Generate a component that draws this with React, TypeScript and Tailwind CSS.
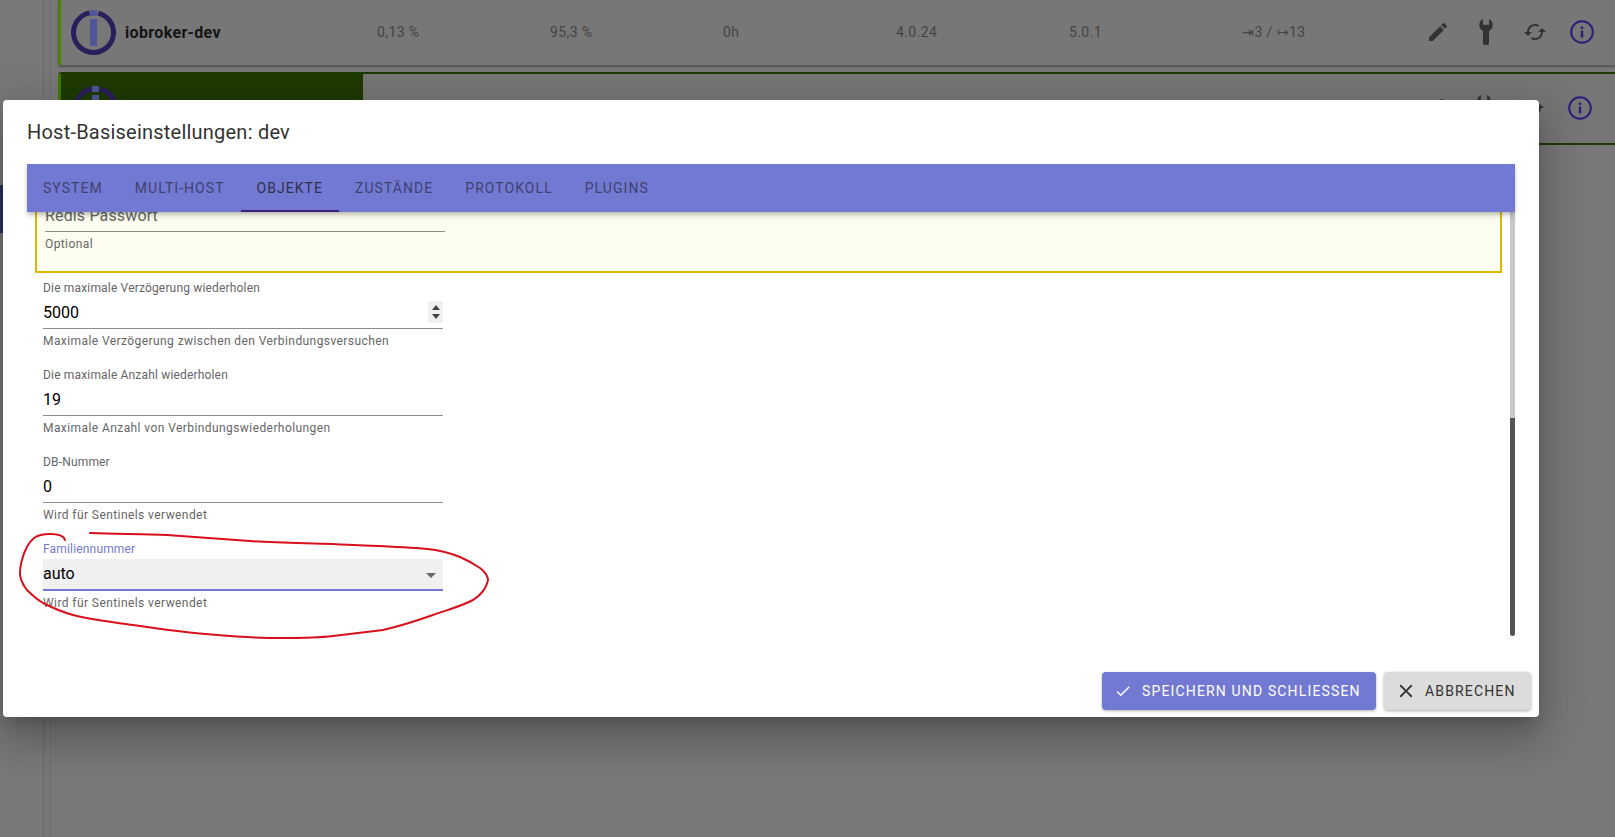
import { MdCached, MdCheck, MdClose, MdEdit } from 'react-icons/md';

const tabs = ['SYSTEM', 'MULTI-HOST', 'OBJEKTE', 'ZUSTÄNDE', 'PROTOKOLL', 'PLUGINS'];
const stats = ['0,13 %', '95,3 %', '0h', '4.0.24', '5.0.1', '⇥3 / ↦13'];

function Logo() {
  return (
    <svg width="45" height="45" viewBox="0 0 45 45">
      <circle
        cx="22.5"
        cy="22.5"
        r="20"
        fill="none"
        stroke="#2a1f5c"
        strokeWidth="5"
        strokeDasharray="116 9.66"
        strokeDashoffset="-4.83"
        transform="rotate(-90 22.5 22.5)"
      />
      <rect x="19" y="0" width="7" height="6" fill="#4d5698" />
      <rect x="19" y="9" width="7" height="27" fill="#4d5698" />
    </svg>
  );
}

function Wrench() {
  return (
    <svg width="14" height="26" viewBox="0 0 13 25" fill="#333333">
      <path d="M3.5 0C1.3 1 0 3.3 0 5.8c0 2.6 1.5 4.7 3.6 5.7V23c0 1.3.6 2 1.6 2h2.6c1 0 1.6-.7 1.6-2V11.5c2.1-1 3.6-3.1 3.6-5.7 0-2.5-1.3-4.8-3.5-5.8v5.5h-6z" />
    </svg>
  );
}

function Info() {
  return (
    <svg width="24" height="24" viewBox="0 0 24 24">
      <circle cx="12" cy="12" r="10.8" fill="none" stroke="#2e1a7a" strokeWidth="2" />
      <rect x="10.8" y="10.5" width="2.4" height="7" fill="#2e1a7a" />
      <rect x="10.8" y="6.5" width="2.4" height="2.4" fill="#2e1a7a" />
    </svg>
  );
}

function RowIcons() {
  return (
    <div className="flex items-center pb-[2px] text-[#333333]">
      <div className="mr-[2px] flex w-[46px] justify-center"><MdEdit size={24} /></div>
      <div className="mr-[3px] flex w-[46px] justify-center"><Wrench /></div>
      <div className="flex w-[46px] justify-center"><MdCached size={24} /></div>
      <div className="flex w-[48px] justify-center"><Info /></div>
    </div>
  );
}

function Field({ label, value, help, spinner }: { label: string; value: string; help: string; spinner?: boolean }) {
  return (
    <div className="mb-[19px] w-[408px] pl-2">
      <div className="text-xs leading-[15px] tracking-[0.17px] text-[#666666]">{label}</div>
      <div className="relative h-[33px] border-b border-[#8c8c8c] pt-[5px] text-base leading-6 text-black">
        {value}
        {spinner && (
          <div className="absolute right-0 top-[5px] flex h-[22px] w-[15px] flex-col items-center justify-center gap-[4px] bg-[#f0f0f0]">
            <div className="h-0 w-0 border-x-[4px] border-b-[5px] border-x-transparent border-b-[#444444]" />
            <div className="h-0 w-0 border-x-[4px] border-t-[5px] border-x-transparent border-t-[#444444]" />
          </div>
        )}
      </div>
      <div className="mt-[5px] text-xs leading-[15px] tracking-[0.42px] text-[#666666]">{help}</div>
    </div>
  );
}

export default function App() {
  return (
    <div className="relative flex h-[837px] w-full overflow-hidden bg-[#787878] font-['Roboto',sans-serif]">
      {/* page behind the dialog */}
      <div className="w-[44px] shrink-0 border-r border-[#6a6a6a]">
        <div className="mt-[185px] h-[48px] bg-[#2c3160]" />
      </div>
      <div className="w-[7px] shrink-0 border-r border-[#6e6e6e]" />
      <div className="min-w-0 flex-1 pl-[7px]">
        <div className="flex h-[66px] items-center rounded-bl border-b border-b-[#5c5c5c] border-l-[3px] border-l-[#4a8500] bg-[#777777] pl-[10px] shadow-[0_1px_2px_rgba(0,0,0,0.35)]">
          <div className="flex w-[306px] shrink-0 items-center gap-[9px]">
            <Logo />
            <span className="text-base font-bold tracking-[0.35px] text-[#141414]">iobroker-dev</span>
          </div>
          {stats.map((s) => (
            <div key={s} className="w-[173px] shrink-0 pb-[2px] text-sm tracking-[0.4px] text-[#444444]">{s}</div>
          ))}
          <RowIcons />
        </div>
        <div className="mt-[6px] flex h-[73px] items-center rounded-tl border-y-2 border-[#1e3a00] bg-[#767676]">
          <div className="flex h-full w-[305px] shrink-0 items-center border-l-[3px] border-l-[#3f7a00] bg-[#1e3a00] pl-[12px]">
            <Logo />
          </div>
          <div className="ml-auto mr-[11px]"><RowIcons /></div>
        </div>
      </div>

      {/* dialog */}
      <div className="absolute left-[3px] top-[100px] flex h-[617px] w-[1536px] flex-col rounded bg-white shadow-[0_11px_15px_-7px_rgba(0,0,0,0.2),0_24px_38px_3px_rgba(0,0,0,0.14),0_9px_46px_8px_rgba(0,0,0,0.12)]">
        <div className="flex h-[64px] shrink-0 items-center px-6 text-xl tracking-[0.22px] text-[#333333]">Host-Basiseinstellungen: dev</div>
        <div className="z-10 mx-6 flex h-[48px] shrink-0 bg-[#7279d2] shadow-[0_2px_4px_-1px_rgba(0,0,0,0.2),0_4px_5px_0_rgba(0,0,0,0.14)]">
          {tabs.map((t) => (
            <div
              key={t}
              className={
                t === 'OBJEKTE'
                  ? 'flex items-center border-b-2 border-[#3c1f7d] px-4 pt-[2px] text-sm tracking-[1.05px] text-[#2f3050]'
                  : 'flex items-center px-4 text-sm tracking-[1.05px] text-[#3f4170]'
              }
            >
              {t}
            </div>
          ))}
        </div>
        <div className="mx-6 flex h-[424px] shrink-0">
          <div className="min-w-0 flex-1 overflow-hidden px-2">
            <div className="-mt-[20px] mb-2 h-[81px] border-2 border-[#dbb900] bg-[#fdfeef] px-2">
              <div className="mt-[10px] h-[28px] w-[400px] border-b border-[#8c8c80] text-base leading-6 tracking-[0.15px] text-[#666666]">Redis Passwort</div>
              <div className="mt-[5px] text-xs leading-[15px] tracking-[0.4px] text-[#666666]">Optional</div>
            </div>
            <Field label="Die maximale Verzögerung wiederholen" value="5000" help="Maximale Verzögerung zwischen den Verbindungsversuchen" spinner />
            <Field label="Die maximale Anzahl wiederholen" value="19" help="Maximale Anzahl von Verbindungswiederholungen" />
            <Field label="DB-Nummer" value="0" help="Wird für Sentinels verwendet" />
            <div className="w-[408px] pl-2">
              <div className="text-xs leading-[15px] tracking-[0.17px] text-[#7279d2]">Familiennummer</div>
              <div className="relative mt-[2px] h-[32px] border-b-2 border-[#7279d2] bg-[#f0f0f0] pt-[3px] text-base leading-6 text-black">
                auto
                <div className="absolute right-[7px] top-[14px] h-0 w-0 border-x-[5px] border-t-[5px] border-x-transparent border-t-[#666666]" />
              </div>
              <div className="mt-[5px] text-xs leading-[15px] tracking-[0.42px] text-[#666666]">Wird für Sentinels verwendet</div>
            </div>
          </div>
          <div className="flex w-[5px] shrink-0 flex-col">
            <div className="flex-1 bg-[#c8c8c8]" />
            <div className="h-[218px] rounded-b-sm bg-[#555555]" />
          </div>
        </div>
        <div className="flex flex-1 items-end justify-end gap-2 pb-[7px] pr-2">
          <button className="flex h-[38px] w-[274px] items-center gap-[10px] rounded bg-[#7279d2] pl-3 text-sm tracking-[1.15px] text-white shadow-[0_1px_3px_rgba(0,0,0,0.3)]">
            <MdCheck size={18} />
            SPEICHERN UND SCHLIESSEN
          </button>
          <button className="flex h-[38px] w-[147px] items-center gap-2 rounded bg-[#dcdcdc] pl-[11px] text-sm tracking-[1.15px] text-[#333333] shadow-[0_1px_3px_rgba(0,0,0,0.35)]">
            <MdClose size={22} />
            ABBRECHEN
          </button>
        </div>
      </div>

      {/* red pen annotation on the screenshot */}
      <svg className="absolute left-0 top-0" width="1615" height="837" viewBox="0 0 1615 837" fill="none">
        <path
          d="M65 540C64 536 58 534 50 534C44 534 38 535 34 538C28 543 24 552 22 560C20 566 20 572 20 575C21 581 23 585 27 590C33 596 38 600 43 603C53 608 62 612 73 615C92 620 112 622 133 625C160 629 190 633 217 635C240 637 260 638 283 638C300 638 316 638 333 636C350 634 367 632 383 630C400 626 416 621 433 615C447 610 462 606 473 600C479 596 483 592 485 588C487 584 488 582 488 579C487 575 484 571 480 568C474 564 467 560 460 557C450 553 438 550 427 549C396 546 364 546 333 544C305 543 278 543 250 541C222 539 195 537 167 535C141 534 116 534 90 533"
          stroke="#d8101c"
          strokeWidth="2"
          strokeLinecap="round"
        />
      </svg>
    </div>
  );
}
